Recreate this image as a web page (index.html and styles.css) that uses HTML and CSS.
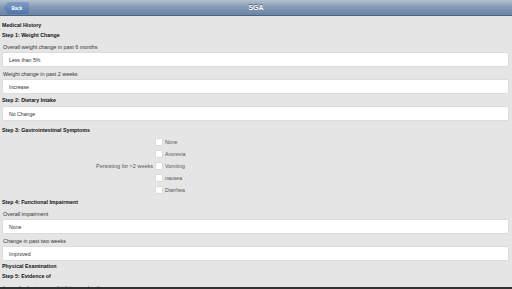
FILE: index.html
```html
<!DOCTYPE html>
<html lang="en">
<head>
    <meta charset="UTF-8">
    <meta name="viewport" content="width=device-width, initial-scale=1.0">
    <title>SGA</title>
    <link rel="stylesheet" href="styles.css">
</head>
<body>
    <header class="header">
        <a class="back-btn" href="#">Back</a>
        <h1 class="title">SGA</h1>
    </header>

    <div class="content">
        <div class="heading">Medical History</div>

        <div class="heading">Step 1: Weight Change</div>
        <div class="field-label">Overall weight change in past 6 months</div>
        <div class="field">Less than 5%</div>
        <div class="field-label">Weight change in past 2 weeks</div>
        <div class="field">Increase</div>

        <div class="heading mt-1">Step 2: Dietary Intake</div>
        <div class="field mt-1">No Change</div>

        <div class="heading mt-4">Step 3: Gastrointestinal Symptoms</div>
        <div class="check-group">
            <div class="check-title">Persisting for &gt;2 weeks</div>
            <div class="check-list">
                <label class="check-row"><span class="box"></span>None</label>
                <label class="check-row"><span class="box"></span>Anorexia</label>
                <label class="check-row"><span class="box"></span>Vomiting</label>
                <label class="check-row"><span class="box"></span>nausea</label>
                <label class="check-row"><span class="box"></span>Diarrhea</label>
            </div>
        </div>

        <div class="heading mt-1">Step 4: Functional Impairment</div>
        <div class="field-label">Overall impairment</div>
        <div class="field">None</div>
        <div class="field-label">Change in past two weeks</div>
        <div class="field">Improved</div>

        <div class="heading">Physical Examination</div>
        <div class="heading">Step 5: Evidence of</div>
        <div class="field-label">Loss of subcutaneous fat (triceps, chest)</div>
    </div>

    <div class="bottom-bar"></div>
</body>
</html>
```

FILE: styles.css
```css
body, html {
    margin: 0;
    padding: 0;
    font-family: 'Liberation Sans', Arial, sans-serif;
    background-color: #e5e5e5;
    overflow: hidden;
}
.header {
    height: 15px;
    display: flex;
    align-items: center;
    justify-content: center;
    position: relative;
    background: linear-gradient(#b4c0cf, #8398b4 50%, #6c84a4);
    border-bottom: 1px solid #4f6482;
}
.title {
    margin: 0;
    font-size: 7px;
    font-weight: bold;
    color: #fff;
    text-shadow: 0 -1px 0 #4a5e7a;
}
.back-btn {
    position: absolute;
    left: 3px;
    top: 2px;
    height: 12px;
    width: 26px;
    padding-left: 2px;
    box-sizing: border-box;
    display: flex;
    align-items: center;
    justify-content: center;
    font-size: 4.5px;
    font-weight: bold;
    color: #fff;
    text-decoration: none;
    background: linear-gradient(#7e9dc8, #5075a9);
    border-radius: 2px;
    clip-path: polygon(5px 0, 100% 0, 100% 100%, 5px 100%, 0 50%);
}
.content {
    padding: 4px 2px 0 2px;
}
.heading {
    font-size: 5.3px;
    font-weight: bold;
    color: #111;
    line-height: 10px;
}
.mt-1 {
    margin-top: 1px;
}
.mt-4 {
    margin-top: 4px;
}
.field-label {
    font-size: 5.4px;
    color: #333;
    line-height: 10px;
    padding-left: 1px;
    margin-top: 2px;
}
.field {
    height: 15px;
    box-sizing: border-box;
    margin-right: 1px;
    padding-left: 6px;
    display: flex;
    align-items: center;
    font-size: 5.2px;
    color: #333;
    background-color: #fff;
    border: 1px solid #dcdcdc;
    border-radius: 2px;
}
.check-group {
    display: grid;
    grid-template-columns: 151px 1fr;
    align-items: center;
    margin-top: 1px;
}
.check-title {
    text-align: right;
    font-size: 5.5px;
    color: #555;
}
.check-list {
    display: flex;
    flex-direction: column;
}
.check-row {
    height: 12px;
    display: flex;
    align-items: center;
    gap: 2px;
    padding-left: 2px;
    font-size: 5.2px;
    color: #555;
}
.box {
    width: 8px;
    height: 8px;
    background-color: #fff;
    border: 1px solid #dadada;
    border-radius: 1px;
    box-sizing: border-box;
}
.bottom-bar {
    position: fixed;
    left: 0;
    right: 0;
    bottom: 0;
    height: 2px;
    background-color: #333;
}
```
